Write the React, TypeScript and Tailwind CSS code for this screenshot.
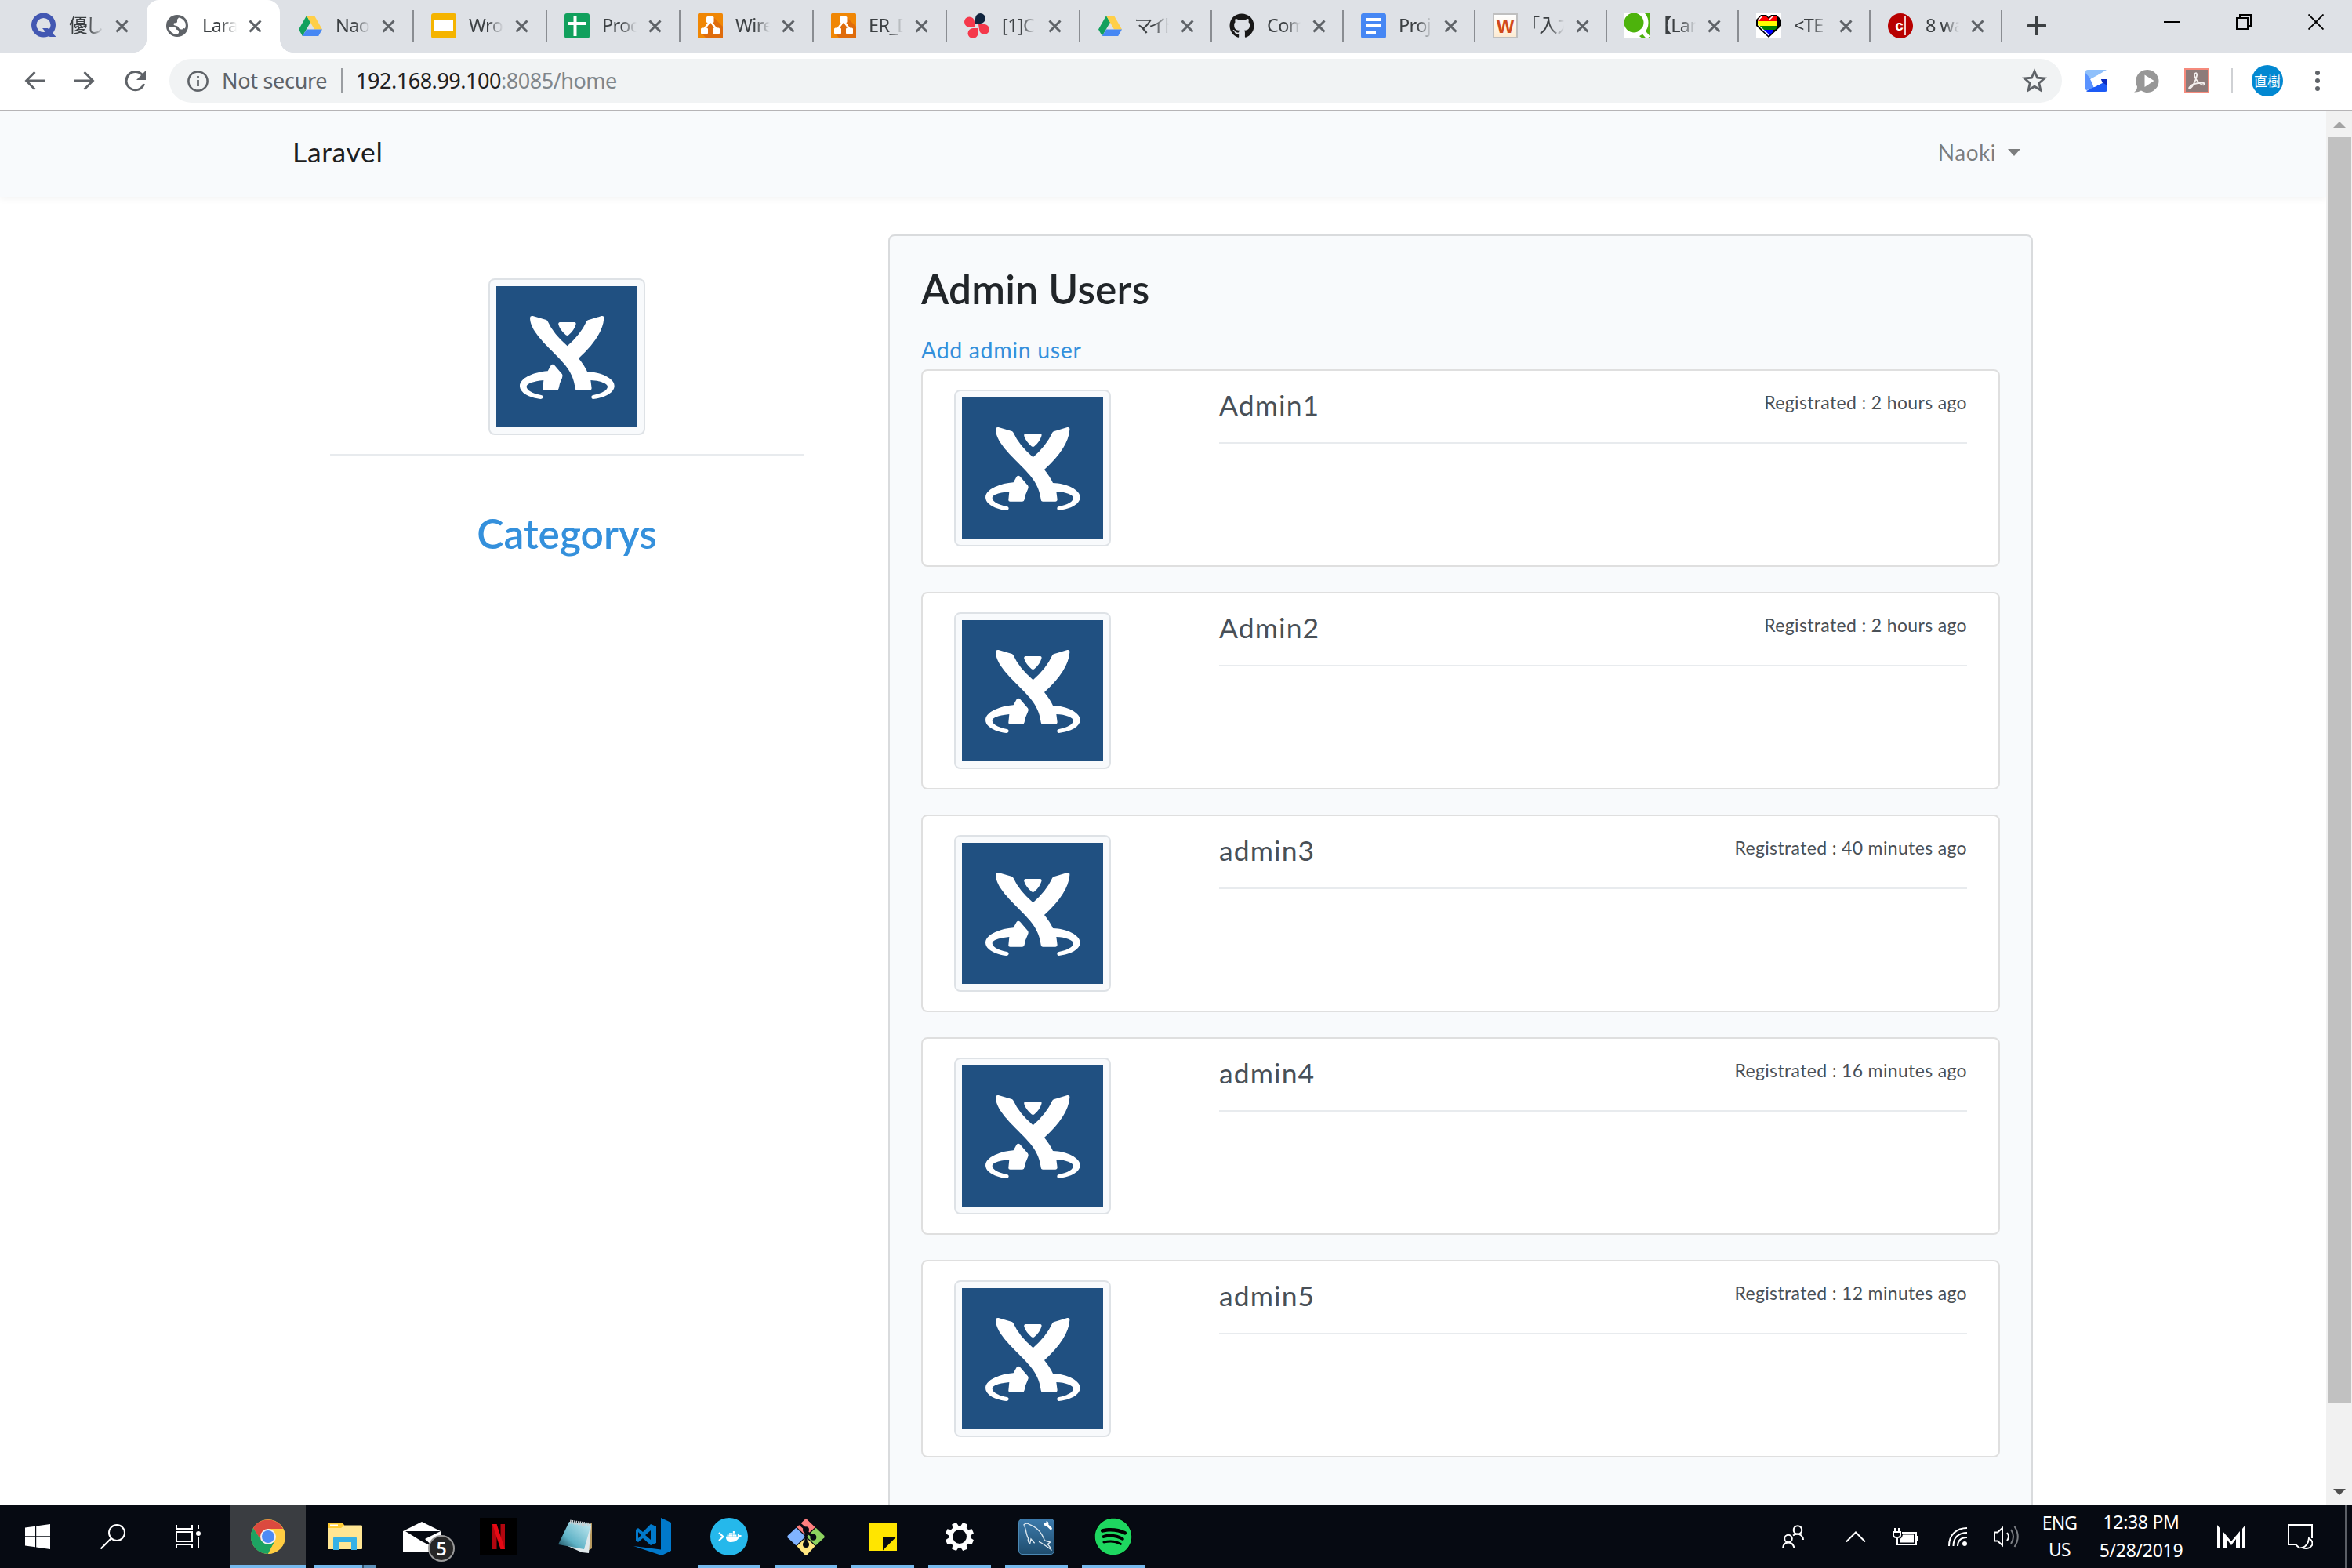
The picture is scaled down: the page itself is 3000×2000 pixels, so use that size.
import React from "react";
import { FaGithub, FaSpotify, FaDocker } from "react-icons/fa";

const X = () => (
  <svg viewBox="0 0 17 17" className="h-[17px] w-[17px] shrink-0">
    <path d="M1.5 1.5L15.5 15.5M15.5 1.5L1.5 15.5" stroke="#5f6368" strokeWidth="3" fill="none" />
  </svg>
);

const Drive = () => (
  <svg viewBox="0 0 32 32" className="h-8 w-8">
    <path d="M11 3L1 20.5L5.8 29L16 11.5Z" fill="#11a05d" />
    <path d="M11 3H21L31 20.5H21Z" fill="#ffcf48" />
    <path d="M5.8 29L11 20.5H31L26.2 29Z" fill="#4687f4" />
  </svg>
);

const Flow = () => (
  <svg viewBox="0 0 32 32" className="h-8 w-8">
    <rect width="32" height="32" rx="1.5" fill="#f08705" />
    <path d="M20 5L32 17V30.500Q32 32 30.500 32H11L5 25.500Z" fill="#df6c0c" />
    <path d="M15 11L8.500 20M17 11L23.500 20" stroke="#fff" strokeWidth="2.600" />
    <rect x="11" y="4" width="9.500" height="8" rx="1.500" fill="#fff" />
    <rect x="4" y="18.500" width="9" height="8" rx="1.500" fill="#fff" />
    <rect x="19" y="18.500" width="9" height="8" rx="1.500" fill="#fff" />
  </svg>
);

const QMark = () => (
  <svg viewBox="0 0 32 32" className="h-8 w-8">
    <circle cx="15.500" cy="15" r="12.300" fill="none" stroke="#4257b2" strokeWidth="6.400" />
    <path d="M14 19H21L31.500 30H23.500Z" fill="#4257b2" />
  </svg>
);

const Globe = () => (
  <svg viewBox="0 0 32 32" className="h-8 w-8">
    <circle cx="16" cy="16" r="14" fill="#5f6368" />
    <path d="M18 5.500Q24 6.500 26.500 12.500Q27.500 16.500 26 19.500Q24 18 22.500 20.500Q18.500 21 18 18.500Q17.500 16 13 15.500Q10.500 14.500 12 12.500Q16.500 12.500 16 10Q15.500 7.500 18 5.500Z" fill="#fff" />
    <path d="M5 17H10.500Q14.500 17 14.500 20.500Q18.500 21 18 24.500Q17.500 27 15 27Q6.500 25.500 5 17Z" fill="#fff" />
  </svg>
);

const Slides = () => (
  <svg viewBox="0 0 32 32" className="h-8 w-8">
    <rect width="32" height="32" rx="3" fill="#f5b400" />
    <rect x="4" y="9" width="24" height="14" fill="#fff" />
  </svg>
);

const Sheets = () => (
  <svg viewBox="0 0 32 32" className="h-8 w-8">
    <rect width="32" height="32" rx="3" fill="#11a05d" />
    <path d="M4 13H28M13.500 4V29" stroke="#fff" strokeWidth="4" />
  </svg>
);

const Docs = () => (
  <svg viewBox="0 0 32 32" className="h-8 w-8">
    <rect width="32" height="32" rx="3" fill="#4687f4" />
    <path d="M6 8H26M6 16H26M6 24H19" stroke="#fff" strokeWidth="4" />
  </svg>
);

const Petals = () => (
  <svg viewBox="0 0 32 32" className="h-8 w-8">
    <path d="M14 13V6.500A6.500 6.500 0 1 1 20.500 13Z" fill="#10243e" />
    <path d="M13 17.500H7A6.500 6.500 0 1 1 13 11Z" fill="#f5384b" />
    <path d="M18 14H25.500A6.500 6.500 0 1 1 19 20.500Z" fill="#f5384b" />
    <path d="M17.500 19V25.500A6.500 6.500 0 1 1 11 19Z" fill="#f5384b" />
  </svg>
);

const WBox = () => (
  <div className="flex h-8 w-8 items-center justify-center border-2 border-[#bfbfbf] bg-gradient-to-b from-white to-[#fdebd3] pt-0.5 font-['Liberation_Sans',sans-serif] text-[24px] leading-none font-bold text-[#d1491b]">
    W
  </div>
);

const QGreen = () => (
  <svg viewBox="0 0 32 32" className="h-8 w-8">
    <rect width="32" height="32" fill="#4db30c" />
    <path d="M0 16V32H23L16 27Z" fill="#fff" />
    <circle cx="12" cy="12" r="15.500" fill="#4db30c" stroke="#fff" strokeWidth="6" />
    <path d="M21 20L30.500 31" stroke="#fff" strokeWidth="5.500" />
  </svg>
);

const Heart = () => (
  <svg viewBox="0 0 32 32" className="h-8 w-8">
    <defs>
      <clipPath id="hc">
        <path d="M2 8L7 3H12L16 7L20 3H25L30 8V15L16 29L2 15Z" />
      </clipPath>
    </defs>
    <rect width="32" height="32" fill="#fff" />
    <path d="M0 8L6 2H13L16 5L19 2H26L32 8V16L16 31L0 16Z" fill="#000" />
    <g clipPath="url(#hc)">
      <rect y="2" width="27" height="8" fill="#f00" />
      <rect y="10" width="27" height="6" fill="#ff0" />
      <rect y="16" width="26" height="5" fill="#008000" />
      <rect y="21" width="21" height="9" fill="#00f" />
      <path d="M2 9L7 4M2 15L16 28" stroke="#fff" strokeWidth="1.800" fill="none" />
      <path d="M17 8L21 4" stroke="#fff" strokeWidth="1.500" />
    </g>
  </svg>
);

const RedC = () => (
  <div className="flex h-8 w-8 items-center justify-center rounded-full bg-[#b80000] pb-0.5 font-['Liberation_Sans',sans-serif] text-[19px] font-bold leading-none text-white">
    c<span className="mt-0.5 ml-px h-6 w-[2px] bg-white/80" />
  </div>
);

const tabs: { icon: React.ReactNode; text: string; wide: boolean; active?: boolean; line?: boolean; tight?: boolean }[] = [
  { icon: <QMark />, text: "優し", wide: true },
  { icon: <Globe />, text: "Lara", wide: true, active: true },
  { icon: <Drive />, text: "Nao", wide: true, line: true },
  { icon: <Slides />, text: "Wro", wide: true, line: true },
  { icon: <Sheets />, text: "Proc", wide: true, line: true },
  { icon: <Flow />, text: "Wire", wide: true, line: true },
  { icon: <Flow />, text: "ER_D", wide: true, line: true },
  { icon: <Petals />, text: "[1]C", wide: true, line: true },
  { icon: <Drive />, text: "マイド", wide: false, line: true, tight: true },
  { icon: <FaGithub className="h-8 w-8 text-[#181717]" />, text: "Com", wide: false, line: true },
  { icon: <Docs />, text: "Proj", wide: false, line: true },
  { icon: <WBox />, text: "「入力", wide: false, line: true },
  { icon: <QGreen />, text: "【Lara", wide: false, line: true },
  { icon: <Heart />, text: "<TE", wide: false, line: true },
  { icon: <RedC />, text: "8 wa", wide: false, line: true },
];

function TabStrip() {
  return (
    <div className="flex h-[67px] bg-[#dee1e6] pl-[17px]">
      {tabs.map((t, i) => (
        <div
          key={i}
          className={
            "relative flex h-[67px] shrink-0 items-center pb-px pl-[23px] " +
            (t.wide ? "w-[170px] " : "w-[168px] ") +
            (t.active ? "z-10 rounded-t-[16px] bg-white" : "")
          }
        >
          {t.active && (
            <>
              <span className="absolute -left-4 bottom-0 h-4 w-4 bg-[radial-gradient(circle_at_0_0,transparent_15.500px,white_16px)]" />
              <span className="absolute -right-4 bottom-0 h-4 w-4 bg-[radial-gradient(circle_at_100%_0,transparent_15.500px,white_16px)]" />
            </>
          )}
          <div className="h-8 w-8 shrink-0">{t.icon}</div>
          <div
            className={
              "ml-[16px] -mt-[2px] overflow-hidden whitespace-nowrap text-[23.500px] leading-[34px] text-[#3c4043] [font-feature-settings:'palt'] [mask-image:linear-gradient(to_right,black_55%,transparent)] " +
              (t.tight ? "tracking-[-3.500px] " : "tracking-[-0.600px] ") +
              (t.wide ? "w-[44px]" : "w-[43px]")
            }
          >
            {t.text}
          </div>
          <div className="ml-[15px]">
            <X />
          </div>
          {t.line && <span className="-mr-px ml-auto h-10 w-[2px] bg-[#8a8d92]" />}
        </div>
      ))}
      <svg viewBox="0 0 24 24" className="mt-[21px] ml-[33px] h-6 w-6 shrink-0">
        <path d="M12 1V23M1 12H23" stroke="#3c4043" strokeWidth="4" strokeLinecap="round" />
      </svg>
      <div className="ml-auto flex h-14 shrink-0 text-black">
        <div className="flex w-[92px] items-center justify-center">
          <span className="h-[2px] w-5 bg-black" />
        </div>
        <div className="flex w-[92px] items-center justify-center">
          <svg viewBox="0 0 20 20" className="h-5 w-5">
            <path d="M1 5H15V19H1ZM5 5V1H19V15H15" fill="none" stroke="#000" strokeWidth="2" />
          </svg>
        </div>
        <div className="flex w-[92px] items-center justify-center">
          <svg viewBox="0 0 20 20" className="h-5 w-5">
            <path d="M0.500 0.500L19.500 19.500M19.500 0.500L0.500 19.500" stroke="#000" strokeWidth="1.900" />
          </svg>
        </div>
      </div>
    </div>
  );
}

function Toolbar() {
  return (
    <div className="flex h-[74px] items-center border-b border-[#b6b4b6] bg-white pb-px pl-[31px]">
      <svg viewBox="0 0 26 26" className="h-[26px] w-[26px] shrink-0">
        <path d="M26 13H3M13.500 2L2.500 13L13.500 24" fill="none" stroke="#5f6368" strokeWidth="2.800" />
      </svg>
      <svg viewBox="0 0 26 26" className="ml-[38px] h-[26px] w-[26px] shrink-0">
        <path d="M0 13H23M12.500 2L23.500 13L12.500 24" fill="none" stroke="#5f6368" strokeWidth="2.800" />
      </svg>
      <svg viewBox="0 0 27 27" className="ml-[38px] h-[27px] w-[27px] shrink-0">
        <path d="M23.200 6.500A11.600 11.600 0 1 0 24.600 17" fill="none" stroke="#5f6368" strokeWidth="3" />
        <path d="M27 0V12H15Z" fill="#5f6368" />
      </svg>
      <div className="ml-[30px] flex h-14 w-[2414px] shrink-0 items-center rounded-full bg-[#f1f3f4] pl-[23px] pr-[19px]">
        <svg viewBox="0 0 27 27" className="h-[27px] w-[27px] shrink-0">
          <circle cx="13.500" cy="13.500" r="12.100" fill="none" stroke="#5f6368" strokeWidth="2.600" />
          <path d="M13.500 12V20M13.500 7V9.700" stroke="#5f6368" strokeWidth="2.700" />
        </svg>
        <span className="ml-[17px] w-[135px] whitespace-nowrap text-[27px] leading-[34px] tracking-[-0.300px] text-[#5f6368]">
          Not secure
        </span>
        <span className="ml-[17px] h-8 w-[2px] bg-[#9a9da1]" />
        <span className="ml-[17px] whitespace-nowrap text-[27px] leading-[34px] tracking-[-0.470px] text-[#80868b]">
          <span className="text-[#202124]">192.168.99.100</span>:8085/home
        </span>
        <svg viewBox="0 0 32 32" className="ml-auto h-8 w-8">
          <path
            d="M16 3.800L19.600 12.200L28.800 13L21.800 19L23.900 28L16 23.200L8.100 28L10.200 19L3.200 13L12.400 12.200Z"
            fill="none" stroke="#5f6368" strokeWidth="2.800"
          />
        </svg>
      </div>
      <svg viewBox="0 0 32 32" className="ml-[28px] h-8 w-8 shrink-0">
        <path d="M2 5Q2 2 5 2H29L8 15L2 8Z" fill="#8fc0fb" />
        <path d="M2 6L9 14L13 26L3 28Q2 27 2 26Z" fill="#5a93ff" />
        <path d="M3 29L13 24L30 16V27Q30 30 27 30H5Q3.500 30 3 29Z" fill="#1d5bf5" />
        <path d="M21.500 14H30V22L23 18Z" fill="#0a2bc0" />
        <path d="M8 14L29 3V13H21.500L23.500 18.500L13.500 24Z" fill="#fff" />
      </svg>
      <svg viewBox="0 0 32 32" className="ml-[32px] h-8 w-8 shrink-0">
        <path d="M17.500 2A14.500 14.500 0 1 1 9 28.600Q5 31 0 30.500Q4 28 4 23.500A14.500 14.500 0 0 1 17.500 2Z" fill="#979797" />
        <path d="M13.500 8.500L25.500 16L13.500 24Z" fill="#fff" />
      </svg>
      <svg viewBox="0 0 32 32" className="ml-[32px] h-8 w-8 shrink-0">
        <rect x="1" y="1" width="30" height="30" fill="#8d7b7a" stroke="#f58a7c" strokeWidth="2" />
        <path
          d="M14 6.500C17.500 5 16.500 12 12 20C8.500 27 5 27 6.500 24.500C8.500 21 16 18.500 22 18.500C28 18.500 26.500 22.500 22.500 21C18 19 13 12.500 13 9Q13 7 14 6.500Z"
          fill="none" stroke="#f4efee" strokeWidth="1.800"
        />
      </svg>
      <span className="ml-[28px] h-8 w-[2px] shrink-0 bg-[#cfd1d4]" />
      <div className="ml-[24px] flex h-10 w-10 shrink-0 items-center justify-center rounded-full bg-[#0288d1] text-[17px] leading-none text-white">
        直樹
      </div>
      <div className="ml-[41px] flex shrink-0 flex-col gap-1">
        <span className="h-1.5 w-1.5 rounded-full bg-[#5f6368]" />
        <span className="h-1.5 w-1.5 rounded-full bg-[#5f6368]" />
        <span className="h-1.5 w-1.5 rounded-full bg-[#5f6368]" />
      </div>
    </div>
  );
}

function Thumb() {
  return (
    <div className="h-[200px] w-[200px] shrink-0 rounded-[8px] border-2 border-[#dee2e6] bg-[#f8fafc] p-2">
      <svg viewBox="39 39 540 540" className="h-[180px] w-[180px] bg-[#205081]">
        <g fill="#fff">
          <path d="M168 160Q169 151 179 153L230 168Q234 169 236 174Q257 221 311 268Q363 222 384 175Q386 170 390 169L442 153Q452 151 451 162Q446 232 354 315Q376 342 387 366C440 368 491 392 491 421C491 447 455 466 410 471Q403 471 403 462Q403 457 410 456C445 449 465 437 465 423C465 412 435 400 400 399L404 430Q404 437 397 437H348Q341 437 341 430C335 370 300 335 253 288C205 240 168 200 168 160Z" />
          <path d="M236 364L248 342Q254 335 262 342L291 376Q295 382 291 390Q281 410 278 430Q277 437 270 437H223Q216 437 217 430L220 399C180 403 155 412 155 423C155 437 175 449 211 456Q218 457 218 463Q217 471 208 471C165 466 129 447 129 421C129 392 180 368 236 364Z" />
          <path d="M283 177H338Q346 178 343 187Q336 210 316 226Q311 230 305 226Q284 208 277 187Q275 178 283 177Z" />
        </g>
      </svg>
    </div>
  );
}

const admins = [
  { name: "Admin1", ago: "2 hours ago" },
  { name: "Admin2", ago: "2 hours ago" },
  { name: "admin3", ago: "40 minutes ago" },
  { name: "admin4", ago: "16 minutes ago" },
  { name: "admin5", ago: "12 minutes ago" },
];

function Page() {
  return (
    <div className="flex h-[1779px] overflow-hidden bg-white font-['Lato',sans-serif]">
      <div className="flex w-[2967px] flex-col">
        <nav className="flex h-[110px] shrink-0 items-start justify-between bg-[#f8fafc] pr-[390px] pl-[373px] shadow-[0_4px_8px_rgba(0,0,0,0.04)]">
          <span className="mt-[25px] text-[35.500px] leading-[56px] tracking-[0.700px] text-black/90">Laravel</span>
          <span className="mt-[25px] flex items-center text-[28px] leading-[56px] tracking-[0.500px] text-black/50">
            Naoki
            <svg viewBox="0 0 16 9" className="ml-[15px] h-[9px] w-4">
              <path d="M0 0H16L8 9Z" fill="currentColor" />
            </svg>
          </span>
        </nav>
        <div className="flex pl-[421px]">
          <aside className="flex w-[604px] flex-col items-center pt-[104px]">
            <Thumb />
            <div className="mt-6 h-[2px] w-full bg-[#e8ebee]" />
            <h1 className="mt-[68px] text-[51.500px] leading-[62px] font-semibold text-[#3490dc]">Categorys</h1>
          </aside>
          <section className="mt-[48px] ml-[108px] h-[2000px] w-[1460px] rounded-[8px] border-2 border-[#d9dbdd] bg-[#f8fafc] px-10 pt-9">
            <h1 className="text-[51.500px] leading-[62px] font-semibold tracking-[0.200px] text-[#212529]">Admin Users</h1>
            <a className="mt-[22px] block text-[28.500px] leading-[50px] tracking-[0.650px] text-[#3490dc]">Add admin user</a>
            <div className="flex flex-col gap-8">
              {admins.map((a) => (
                <div key={a.name} className="flex h-[252px] rounded-[8px] border-2 border-[#dfdfdf] bg-white px-10 pt-6">
                  <Thumb />
                  <div className="ml-[138px] w-[954px]">
                    <div className="flex h-[67px] items-start justify-between text-[#495057]">
                      <span className="text-[35.500px] leading-[39px] tracking-[1.100px]">{a.name}</span>
                      <span className="text-[23px] leading-[32px] tracking-[0.350px]">Registrated : {a.ago}</span>
                    </div>
                    <div className="h-[2px] bg-[#e8ebee]" />
                  </div>
                </div>
              ))}
            </div>
          </section>
        </div>
      </div>
      <div className="flex w-[33px] flex-col items-center bg-[#f1f1f1]">
        <svg viewBox="0 0 16 8" className="mt-[14px] h-2 w-4 shrink-0"><path d="M8 0L16 8H0Z" fill="#a3a3a3" /></svg>
        <div className="mt-[12px] h-[1614px] w-[30px] shrink-0 bg-[#c1c1c1]" />
        <svg viewBox="0 0 16 8" className="mt-auto mb-[13px] h-2 w-4 shrink-0"><path d="M8 8L16 0H0Z" fill="#505050" /></svg>
      </div>
    </div>
  );
}

const Chrome = () => (
  <svg viewBox="0 0 44 44" className="h-11 w-11">
    <circle cx="22" cy="22" r="22" fill="#ffcd42" />
    <path d="M22 12H41.100A22 22 0 0 0 2.900 11L13 27Z" fill="#db4a3f" />
    <path d="M2.900 11A22 22 0 0 0 22 44L30.700 27L13.300 27Z" fill="#1da362" />
    <path d="M22 44A22 22 0 0 0 41.100 12H22L31 27Z" fill="#ffcd42" />
    <circle cx="22" cy="22" r="10" fill="#f1f1f1" />
    <circle cx="22" cy="22" r="8" fill="#4c8bf5" />
  </svg>
);
const Explorer = () => (
  <svg viewBox="0 0 44 36" className="h-9 w-11">
    <path d="M0 1Q0 0 1 0H18L21 3V8H0Z" fill="#fc3" />
    <path d="M0 7H17L21 3.500H43Q44 3.500 44 5V33Q44 34 43 34H1Q0 34 0 33Z" fill="#ffe693" />
    <rect x="3" y="2.500" width="10" height="2" fill="#fff" />
    <path d="M7 35V20Q7 18 9 18H35Q37 18 37 20V35H30V25H14V35Z" fill="#35b1e6" />
  </svg>
);
const Mail = () => (
  <div className="relative">
    <svg viewBox="0 0 48 38" className="h-[38px] w-12">
      <path d="M0 12L24 0L48 12V38H0Z" fill="#fff" />
      <path d="M3 12H48L28 22L40 33L24 25Z" fill="#060a12" />
    </svg>
    <span className="absolute top-[17px] left-8 flex h-[34px] w-[34px] items-center justify-center rounded-full border-2 border-[#9a9a9a] bg-[#262626] text-[23px] leading-none font-semibold text-white">
      5
    </span>
  </div>
);
const Netflix = () => (
  <div className="flex h-12 w-12 items-center justify-center bg-black">
    <svg viewBox="0 0 16 32" className="h-8 w-4">
      <rect width="5.500" height="32" fill="#b1060f" />
      <rect x="10.500" width="5.500" height="32" fill="#b1060f" />
      <path d="M0 0H5.500L16 32H10.500Z" fill="#e50914" />
    </svg>
  </div>
);
const Notepad = () => (
  <svg viewBox="0 0 44 44" className="h-11 w-11">
    <defs>
      <linearGradient id="np" x1="0" y1="1" x2="1" y2="0">
        <stop offset="0" stopColor="#14404f" />
        <stop offset="0.350" stopColor="#5fb2c6" />
        <stop offset="1" stopColor="#c9edf4" />
      </linearGradient>
    </defs>
    <path d="M36 6L43 5L43 37L38 40Z" fill="#b89a5e" />
    <path d="M12 34L36 5L42 8L39 43L30 42Z" fill="#dfe8ea" />
    <path d="M14 3L42 6L33 38L0 32Z" fill="url(#np)" />
    <path d="M15 3L42 7" stroke="#c9cfd2" strokeWidth="5" strokeDasharray="1.500 1" />
  </svg>
);
const VSCode = () => (
  <svg viewBox="0 0 48 48" className="h-12 w-12">
    <path d="M35 0L48 6V42L36 48L0 36L35 40.500Z" fill="#0179cb" />
    <path fillRule="evenodd" d="M22 8L29 11V32L22 35L12 26L6 31L3 29V15L6 13L12 18ZM22 16L15 22L22 28ZM6 18V26L10 22Z" fill="#0179cb" />
  </svg>
);
const DockerTerm = () => (
  <div className="flex h-12 w-12 items-center justify-center rounded-full bg-[#25b8eb] pl-px">
    <svg viewBox="0 0 8 12" className="h-3 w-2 shrink-0"><path d="M1 1L6.500 6L1 11" fill="none" stroke="#fff" strokeWidth="2.200" /></svg>
    <FaDocker className="ml-[2px] h-[20px] w-[20px] text-white" />
  </div>
);
const Git = () => (
  <svg viewBox="0 0 144 144" className="h-12 w-12">
    <path d="M72 2L107 36L72 68L37 36Z" fill="#ff7f7f" />
    <path d="M34 38L70 72L34 106L2 76Q0 72 2 68Z" fill="#80b3ff" />
    <path d="M110 38L142 68Q144 72 142 76L110 106L74 72Z" fill="#8dd35f" />
    <path d="M72 76L107 108L76 142Q72 144 68 142L37 108Z" fill="#ffe680" />
    <path d="M45 20L72 44V100M72 52L100 72" fill="none" stroke="#060a12" strokeWidth="10" />
    <circle cx="72" cy="102" r="12" fill="#060a12" />
    <circle cx="100" cy="74" r="12" fill="#060a12" />
    <circle cx="72" cy="46" r="12" fill="#060a12" />
  </svg>
);
const Sticky = () => (
  <svg viewBox="0 0 36 36" className="h-9 w-9">
    <rect width="36" height="36" fill="#ffe500" />
    <path d="M18 18H35.500L18 35.500Z" fill="#060a12" />
  </svg>
);
const Gear = () => (
  <svg viewBox="-18 -18 36 36" className="h-9 w-9">
    <circle r="11.500" fill="none" stroke="#fff" strokeWidth="5" />
    {[22.5, 67.5, 112.5, 157.5, 202.5, 247.5, 292.5, 337.5].map((d) => (
      <path key={d} d="M-4.200 -12L-3 -18.200H3L4.200 -12Z" fill="#fff" transform={`rotate(${d})`} />
    ))}
  </svg>
);
const MySQL = () => (
  <svg viewBox="0 0 138 138" className="h-[46px] w-[46px]">
    <defs>
      <linearGradient id="ms" x1="0" y1="0" x2="0" y2="1">
        <stop offset="0" stopColor="#3c7aab" />
        <stop offset="1" stopColor="#1f4d6e" />
      </linearGradient>
    </defs>
    <rect x="1.500" y="1.500" width="135" height="135" rx="13" fill="url(#ms)" stroke="#4b88b3" strokeWidth="3" />
    <path d="M20 24Q30 14 42 22Q75 34 90 62Q98 76 100 84L122 90L112 98Q122 108 125 118L98 100Q88 92 78 88M20 24Q26 30 28 44Q32 66 38 76Q34 88 44 96L48 78Q56 88 62 94" fill="none" stroke="#dfe9f0" strokeWidth="4" />
    <path d="M102 16L124 38" stroke="#fff" strokeWidth="9" strokeLinecap="round" />
    <circle cx="106" cy="19" r="9" fill="#fff" />
    <circle cx="102" cy="12" r="5" fill="#3a77a7" />
  </svg>
);
const Spotify = () => (
  <div className="flex h-12 w-12 items-center justify-center rounded-full bg-black">
    <FaSpotify className="h-12 w-12 text-[#1ed760]" />
  </div>
);

const apps: { icon: React.ReactNode; run?: "active" | "stack" | "on" }[] = [
  { icon: <Chrome />, run: "active" },
  { icon: <Explorer />, run: "stack" },
  { icon: <Mail /> },
  { icon: <Netflix /> },
  { icon: <Notepad /> },
  { icon: <VSCode /> },
  { icon: <DockerTerm />, run: "on" },
  { icon: <Git />, run: "on" },
  { icon: <Sticky />, run: "on" },
  { icon: <Gear />, run: "on" },
  { icon: <MySQL />, run: "on" },
  { icon: <Spotify />, run: "on" },
];

function Taskbar() {
  return (
    <div className="flex h-20 bg-[#060a12] text-white">
      <div className="flex w-24 items-center justify-center">
        <svg viewBox="0 0 32 32" className="h-8 w-8">
          <path d="M0 4.500L13 2.700V15.300H0ZM14.200 2.500L32 0V15.300H14.200ZM0 16.700H13V29.300L0 27.500ZM14.200 16.700H32V32L14.200 29.500Z" fill="#fff" />
        </svg>
      </div>
      <div className="flex w-24 items-center justify-center">
        <svg viewBox="0 0 32 32" className="h-8 w-8">
          <circle cx="21" cy="11" r="10" fill="none" stroke="#fff" strokeWidth="2" />
          <path d="M14 18L0.500 31.500" stroke="#fff" strokeWidth="2.200" />
        </svg>
      </div>
      <div className="flex w-24 items-center justify-center">
        <svg viewBox="0 0 32 30" className="h-[30px] w-8">
          <path d="M1 0V5H21V0M1 9H21V21H1ZM1 30V25H21V30M29 0V5M29 16V30" fill="none" stroke="#fff" strokeWidth="2" />
          <circle cx="29" cy="11" r="3" fill="#fff" />
        </svg>
      </div>
      <div className="ml-1.5 flex gap-[2px]">
        {apps.map((a, i) => (
          <div key={i} className={"flex w-24 flex-col items-center " + (a.run === "active" ? "bg-[#3a3d41]" : "")}>
            <div className="flex h-[76px] items-center pt-1">{a.icon}</div>
            {a.run === "active" && <span className="h-1 w-full bg-[#76b9ed]" />}
            {a.run === "on" && <span className="h-1 w-20 bg-[#76b9ed]" />}
            {a.run === "stack" && (
              <span className="flex h-1 w-20">
                <span className="w-[62px] bg-[#76b9ed]" />
                <span className="w-[2px] bg-[#33536b]" />
                <span className="w-4 bg-[#5d91ba]" />
              </span>
            )}
          </div>
        ))}
      </div>
      <div className="ml-auto flex items-center">
        <div className="flex w-16 justify-center">
          <svg viewBox="0 0 28 30" className="h-[30px] w-7">
            <g fill="none" stroke="#fff" strokeWidth="2">
              <circle cx="20" cy="6.500" r="5.300" />
              <path d="M14 13.500Q20 9.500 24.500 13.500Q27 16 27 19" />
              <circle cx="8" cy="17.500" r="4.800" />
              <path d="M1 30Q1.500 22.500 8 22.500Q14.500 22.500 15.500 30" />
            </g>
          </svg>
        </div>
        <div className="ml-4 flex w-16 justify-center">
          <svg viewBox="0 0 26 14" className="h-3.5 w-[26px]"><path d="M1 13.500L13 1.500L25 13.500" fill="none" stroke="#fff" strokeWidth="2" /></svg>
        </div>
        <div className="flex w-16 justify-center">
          <svg viewBox="0 0 32 24" className="h-6 w-8">
            <path d="M2 1V6M7 1V6M0 6H9V10Q9 13 4.500 13Q0 13 0 10ZM5 13V22H29V7H11" fill="none" stroke="#fff" strokeWidth="2" />
            <path d="M12 9.500H26V19.500H8V15Q11 14 12 9.500Z" fill="#fff" />
            <rect x="30" y="11" width="2" height="7" fill="#fff" />
          </svg>
        </div>
        <div className="flex w-[68px] justify-center">
          <svg viewBox="0 0 24 24" className="h-6 w-6">
            <g fill="none" stroke="#fff" strokeWidth="2">
              <path d="M1 24Q1 13 7.500 7Q14 1 24 1" />
              <path d="M6.500 24Q6.500 16 11 11.500Q16 7 24 7" />
              <path d="M12 24Q12 19 15 16Q18 13 24 13" />
            </g>
            <circle cx="21" cy="21" r="3" fill="#fff" />
          </svg>
        </div>
        <div className="flex w-14 justify-center">
          <svg viewBox="0 0 32 28" className="h-7 w-8">
            <g fill="none" strokeWidth="2">
              <path d="M1 8.500H5L11 3V25L5 19.500H1Z" stroke="#fff" />
              <path d="M17 9Q21 14 17 19" stroke="#fff" />
              <path d="M22 5Q28 14 22 23M26.500 1Q35 14 26.500 27" stroke="#7c7f84" />
            </g>
          </svg>
        </div>
        <div className="flex w-20 flex-col items-center pb-[2px] text-[23px] leading-[34px] tracking-[-0.800px]">
          <span>ENG</span>
          <span>US</span>
        </div>
        <div className="flex w-32 flex-col items-center pb-[2px] text-[23px] leading-[36px] tracking-[-0.300px]">
          <span>12:38 PM</span>
          <span>5/28/2019</span>
        </div>
        <div className="flex w-[102px] justify-center">
          <svg viewBox="0 0 36 30" className="h-[30px] w-9">
            <path d="M0 0L4 5V30H0ZM36 0L32 5V30H36ZM7 8L18 21L29 8V30H24V18L18 26L12 18V30H7Z" fill="#fff" />
          </svg>
        </div>
        <div className="flex w-[74px] justify-center">
          <svg viewBox="0 0 32 32" className="h-8 w-8">
            <path d="M31 18V1H1V26H10L15.500 31" fill="none" stroke="#fff" strokeWidth="2" />
            <path d="M27 18Q33 22 31 27Q27 33 18.500 30Q26 28 27 18Z" fill="none" stroke="#fff" strokeWidth="2" />
          </svg>
        </div>
        <span className="mr-[7px] ml-5 h-20 w-[2px] bg-[#5b5f66]" />
      </div>
    </div>
  );
}

export default function App() {
  return (
    <div className="flex h-[2000px] w-[3000px] flex-col overflow-hidden bg-white font-['Noto_Sans','Noto_Sans_CJK_JP',sans-serif]">
      <TabStrip />
      <Toolbar />
      <Page />
      <Taskbar />
    </div>
  );
}
